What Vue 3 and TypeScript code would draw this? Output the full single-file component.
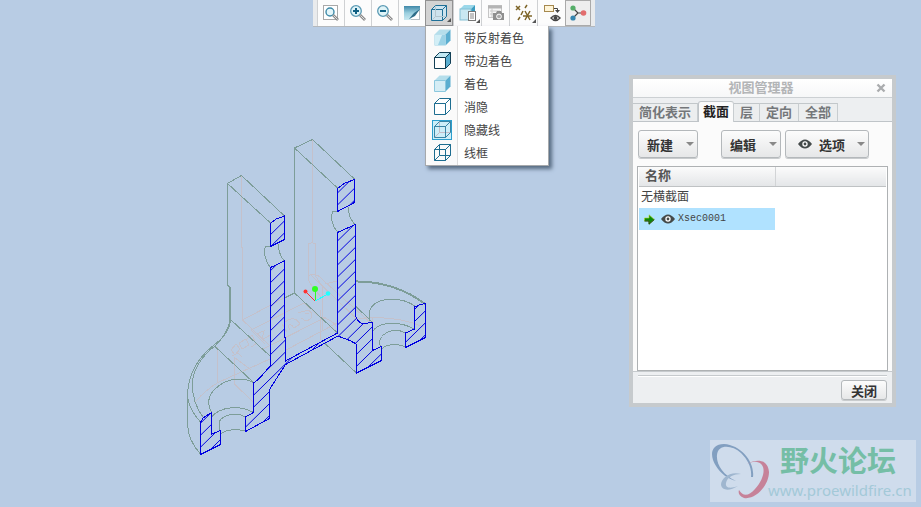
<script setup lang="ts">
import { ref } from 'vue'

interface StyleItem {
  name: string
  kind: 'reflect' | 'edges' | 'shaded' | 'nohidden' | 'hidden' | 'wire'
}

const styles: StyleItem[] = [
  { name: '带反射着色', kind: 'reflect' },
  { name: '带边着色', kind: 'edges' },
  { name: '着色', kind: 'shaded' },
  { name: '消隐', kind: 'nohidden' },
  { name: '隐藏线', kind: 'hidden' },
  { name: '线框', kind: 'wire' },
]
const activeStyle = ref<StyleItem['kind']>('hidden')

const tabs: string[] = ['简化表示', '截面', '层', '定向', '全部']
const activeTab = ref('截面')

// Section hatching: parallel lines, 12 units apart, drawn across the whole model
const hatch: string = Array.from({ length: 54 }, (_, k) => {
  const c = 355.7 + 12 * k
  return `M180 ${(c - 0.98 * 180).toFixed(1)}L440 ${(c - 0.98 * 440).toFixed(1)}`
}).join('')

const cuts: string[] = [
  'M270.5 223.5L276 219L284.5 216V239.5L270.5 246.5Z',
  'M337.5 188.5L345 183L354.5 179.5V202.5L337.5 211.5Z',
  'M337.5 232.5L355.5 224.5V316C357 320 359 323 363 323.5L372.5 322.5V350.5L381.5 346.5V360.5L356.5 373V344.5C351 340 345 339 338 336L285.5 364.5L269.5 389.5V418.5L245.5 431.5V417L253.5 412.5V383C262 378 264 372 268.5 368L270.5 365V267.5L284.5 261V337L285.5 338V361L337.5 333Z',
  'M200.5 422.5L203 418L211.5 412.5V434L220.5 430.5V444.5L200.5 454.5Z',
  'M414.5 307L420 304.5L425.5 303.5V337.5L405.5 347.5V333L414.5 329Z',
]

const edges: string[] = [
  'M270.5 223L227.5 183.5L241.5 175.5L284.5 216',
  'M227.5 183.5V285L230.5 288V319C230 331 222 339 214 345C200 356 187.5 373 187.5 397V424C188 436 193 446 200.5 454',
  'M229.5 288V322C228 332 221 340 215 346C204 354 192.5 369 192.5 383C192 401 199 412 203.5 418',
  'M187.5 397C189 407 195 416 200.5 422',
  'M231 320L270.5 356.5M215 346.5L253.5 382.5',
  'M253.5 382.5C245 378 234 378 225 382C210 390 205 400 211.5 412.5',
  'M211.5 417C221 406 240 405 253.5 412.5',
  'M219.5 431V421C224 414 238 412 245.5 417M220.5 434C226 429 238 429 245.5 431',
  'M270.5 246.5L266 246.5C263 250 265 261 270.5 268M278.5 244C278 251 281 257 284.5 261',
  'M337.5 188L294.5 148L312.5 139.5L354.5 179',
  'M294.5 148V293L337.5 333M294.5 293L284.5 298',
  'M337.5 211.5H333C330 217 332 226 337.5 232M348.5 207C348 214 351 220 354.5 224',
  'M370 321C367 309 373 302 384 300C394 298 407 300 414.5 306',
  'M372.5 332C377 323 395 319 414.5 329',
  'M380.5 347C376 335 392 326 405.5 333M382 349C386 344 398 343 405.5 347',
  'M355.5 306L372 322M325 343.5L356.5 373',
]

const hidden: string[] = [
  'M241.5 176V247H242.5V320L284 298M242.5 320L270 346',
  'M217.5 347V383M234.5 357V384L254 403M195 402C203 393 210 387 219 382L270 359',
  'M251 330L304 303L337 332M251 330L265 344M234 357L251 370M261 350L326 317',
  'M312.5 139V243M308.5 279V244L312 242.5L315.5 244V276L322 286V330M308.5 279C309 284 315 290 322 298',
  'M308.5 276C314 272 320 276 325 282L371 323M310 274L365 327M325 284L337 281',
  'M320.5 310V340M322 317C328 319 334 322 337 327M355.5 319C370 317 397 316 424 327',
  'M372.5 318V350M286 350L337 323',
  'M231 350L236 344L240 349L235 355ZM239 343L246 339L249 345L242 349ZM247 339L252 335L256 344L251 347M256 334L264 331L262 340L270 335M232 356L238 353L242 357',
  'M285 322C292 316 297 319 300 324L294 328C290 322 287 325 290 330M298 313L308 310C314 313 313 319 306 321L301 318M305 314L309 313M282 324L287 332',
]
</script>

<template>
  <main class="stage">
    <svg class="model" viewBox="180 130 260 340" role="img" aria-label="Xsec0001">
      <defs>
        <clipPath id="section-clip">
          <path v-for="(d, i) in cuts" :key="i" :d="d" />
        </clipPath>
      </defs>
      <g class="hidden-lines"><path v-for="(d, i) in hidden" :key="i" :d="d" /></g>
      <g class="edge-lines"><path v-for="(d, i) in edges" :key="i" :d="d" /></g>
      <path class="rim" d="M355.5 281.5C382 281 407 290 425 304" />
      <path class="section hatch" :d="hatch" clip-path="url(#section-clip)" />
      <path v-for="(d, i) in cuts" :key="i" class="section" :d="d" />
      <path class="axis-x" d="M315 301L306 292" />
      <path class="axis-y" d="M315 301V289" />
      <path class="axis-z" d="M315 301L328 294" />
      <circle cx="305.5" cy="291.5" r="2" fill="#ff3030" />
      <circle cx="315" cy="289" r="3" fill="#30ff20" />
      <circle cx="328" cy="293.5" r="2.3" fill="#20ffff" />
    </svg>

    <div class="toolbar-row">
      <nav class="toolbar" aria-label="视图">
        <button class="tool" type="button" aria-label="重新调整">
          <svg class="icon" viewBox="0 0 18 18">
            <rect x="1.5" y="1.5" width="14" height="14" fill="#fff" stroke="#a9a9a9" />
            <circle cx="8" cy="8" r="4" fill="#e4f6fa" stroke="#3e8aa8" stroke-width="1.4" />
            <path d="M11 11L16 16" stroke="#8b8b8b" stroke-width="2.6" />
            <path d="M11.5 11.5L15.6 15.6" stroke="#ddd" />
          </svg>
        </button>
        <button class="tool" type="button" aria-label="放大">
          <svg class="icon" viewBox="0 0 18 18">
            <circle cx="7" cy="7" r="5.3" fill="#dff4f8" stroke="#5a9ab4" stroke-width="1.3" />
            <path d="M4 7H10M7 4V10" stroke="#0e5f83" stroke-width="2" />
            <path d="M11 11L16 16" stroke="#8b8b8b" stroke-width="2.8" />
            <path d="M11.5 11.5L15.6 15.6" stroke="#ddd" />
          </svg>
        </button>
        <button class="tool" type="button" aria-label="缩小">
          <svg class="icon" viewBox="0 0 18 18">
            <circle cx="7" cy="7" r="5.3" fill="#dff4f8" stroke="#5a9ab4" stroke-width="1.3" />
            <path d="M4 7H10" stroke="#0e5f83" stroke-width="2" />
            <path d="M11 11L16 16" stroke="#8b8b8b" stroke-width="2.8" />
            <path d="M11.5 11.5L15.6 15.6" stroke="#ddd" />
          </svg>
        </button>
        <button class="tool" type="button" aria-label="重画">
          <svg class="icon" viewBox="0 0 18 18">
            <defs>
              <linearGradient id="repaint" x1="0" y1="0" x2="0" y2="1">
                <stop offset="0" stop-color="#3f88a8" />
                <stop offset=".5" stop-color="#9bcfdf" />
                <stop offset="1" stop-color="#c9e9f1" />
              </linearGradient>
            </defs>
            <rect x="1.5" y="2.5" width="15" height="13" fill="#fff" stroke="#b5bfc4" />
            <path d="M1 2H17V6L10 11C8 12 8 14 8 16H1Z" fill="url(#repaint)" />
            <path d="M17 5L11 9L6 15L12 12Z" fill="#2c6c88" />
          </svg>
        </button>
        <div class="dropdown">
          <button class="tool wide pressed" type="button" aria-label="显示样式" aria-haspopup="menu" aria-expanded="true">
            <svg class="icon" viewBox="0 0 18 18">
              <path d="M1.5 5.5L5.5 1.5H16.5V12.5L12.5 16.5H1.5ZM1.5 5.5H12.5V16.5M12.5 5.5L16.5 1.5" fill="#cde3ee" stroke="#1f6f97" />
              <path d="M5.5 2.5V12.5H15.5M5.5 12.5L2.5 15.5" fill="none" stroke="#b3c6cf" />
            </svg>
            <span class="corner"></span>
          </button>
          <div class="menu" role="menu">
            <button
              v-for="item in styles"
              :key="item.kind"
              class="menu-item"
              type="button"
              role="menuitemradio"
              :aria-checked="item.kind === activeStyle"
              @click="activeStyle = item.kind"
            >
              <span class="menu-icon" :class="{ chosen: item.kind === activeStyle }">
                <svg class="cube" :class="item.kind" viewBox="0 0 17 17">
                  <path class="back" d="M5.5 .5V11.5H16.5M5.5 11.5L.5 16.5" />
                  <path class="top" d="M.5 5.5L5.5 .5H16.5L11.5 5.5Z" />
                  <path class="side" d="M11.5 5.5L16.5 .5V11.5L11.5 16.5Z" />
                  <path class="front" d="M.5 5.5H11.5V16.5H.5Z" />
                  <path class="shine" d="M1 6H8L4 16H1Z" />
                </svg>
              </span>
              <span class="menu-text">{{ item.name }}</span>
            </button>
          </div>
        </div>
        <button class="tool wide" type="button" aria-label="已保存方向">
          <svg class="icon" viewBox="0 0 18 18">
            <path d="M1 5L5 1H16L12 5Z" fill="#9bd8ea" />
            <path d="M12 5L16 1V11L12 15Z" fill="#3a9cc0" />
            <rect x="1" y="5" width="11" height="11" fill="#c9e8f2" stroke="#83bfd4" />
            <rect x="9.5" y="7.5" width="7" height="9" fill="#fff" stroke="#777" />
            <path d="M11 10H15M11 12H15M11 14H15" stroke="#888" />
          </svg>
          <span class="corner"></span>
        </button>
        <button class="tool wide" type="button" aria-label="视图图像">
          <svg class="icon" viewBox="0 0 18 18">
            <rect x="1.5" y="1.5" width="13" height="12" fill="#f7f7f7" stroke="#c6c6c6" />
            <path d="M1 3H15" stroke="#b5b5b5" stroke-width="3" />
            <path d="M3 7H13M3 10H13M5 4V13" stroke="#c9c9c9" />
            <path d="M6 9H9L10 7H14L15 9H17V16H6Z" fill="#8f8f8f" />
            <circle cx="12" cy="12.5" r="2.4" fill="#aaa" stroke="#fff" />
          </svg>
        </button>
        <button class="tool wide" type="button" aria-label="基准显示过滤器">
          <svg class="icon" viewBox="0 0 18 18">
            <g fill="none" stroke="#7d6428" stroke-width="1.5">
              <path d="M1 2L5 6M5 2L1 6" />
              <path d="M12 1L10 4M8 7L6 11M5 13L3 16" />
              <path d="M8 12H17M10 7L15 16M15 7L10 16" />
            </g>
          </svg>
          <span class="corner"></span>
        </button>
        <button class="tool wide" type="button" aria-label="注释显示">
          <svg class="icon" viewBox="0 0 18 18">
            <rect x="1.5" y="1.5" width="9" height="6" fill="#fff5d8" stroke="#a6894f" />
            <path d="M11 4.5H14.5V8" fill="none" stroke="#444" />
            <path d="M12 6H17L14.5 9Z" fill="#444" />
            <path d="M8 14Q12.5 9 17 14Q12.5 19 8 14Z" fill="#fff" stroke="#444" stroke-width="1.4" />
            <circle cx="12.5" cy="14" r="2" fill="#444" />
          </svg>
        </button>
        <button class="tool selected" type="button" aria-label="旋转中心">
          <svg class="icon" viewBox="0 0 18 18">
            <path d="M4 4L9 9L4 14M9 9H14" fill="none" stroke="#444" stroke-width="1.2" />
            <circle cx="4" cy="4" r="2.6" fill="#55ae68" />
            <circle cx="4" cy="14" r="2.6" fill="#3686b0" />
            <circle cx="14.5" cy="9" r="2.8" fill="#e26d6d" />
          </svg>
        </button>
      </nav>
    </div>

    <section class="dialog" role="dialog" aria-labelledby="dialog-title">
      <header class="title-bar">
        <h1 id="dialog-title">视图管理器</h1>
        <button class="close" type="button" aria-label="关闭窗口">
          <svg viewBox="0 0 10 10"><path d="M1.5 1.5L8.5 8.5M8.5 1.5L1.5 8.5" /></svg>
        </button>
      </header>
      <div class="tabs" role="tablist">
        <button
          v-for="tab in tabs"
          :key="tab"
          class="tab"
          :class="{ current: tab === activeTab }"
          type="button"
          role="tab"
          :aria-selected="tab === activeTab"
          @click="activeTab = tab"
        >{{ tab }}</button>
      </div>
      <div class="panel">
        <div class="actions">
          <button class="action new" type="button"><span>新建</span><i class="arrow"></i></button>
          <button class="action" type="button"><span>编辑</span><i class="arrow"></i></button>
          <button class="action options" type="button">
            <svg class="eye" viewBox="0 0 14 10">
              <path d="M0 5Q7 -4 14 5Q7 14 0 5Z" fill="#444a4a" />
              <circle cx="7" cy="5" r="2.7" fill="#fff" />
              <circle cx="7" cy="5" r="1.4" fill="#444a4a" />
            </svg>
            <span>选项</span><i class="arrow"></i>
          </button>
        </div>
        <div class="list">
          <table>
            <thead>
              <tr><th scope="col">名称</th><td></td></tr>
            </thead>
            <tbody>
              <tr><td>无横截面</td><td></td></tr>
              <tr class="picked">
                <td>
                  <span class="entry">
                    <svg class="go" viewBox="0 0 11 11">
                      <path d="M.5 4H5V.8L10.3 5.5L5 10.2V7H.5Z" fill="#0a8a0a" stroke="#b8d820" stroke-width=".6" />
                      <path d="M.5 7H5V10.2L10.3 5.5" fill="none" stroke="#153c15" />
                    </svg>
                    <svg class="eye" viewBox="0 0 14 10">
                      <path d="M0 5Q7 -4 14 5Q7 14 0 5Z" fill="#444a4a" />
                      <circle cx="7" cy="5" r="2.7" fill="#fff" />
                      <circle cx="7" cy="5" r="1.4" fill="#444a4a" />
                    </svg>
                    <span class="code">Xsec0001</span>
                  </span>
                </td>
                <td></td>
              </tr>
            </tbody>
          </table>
        </div>
      </div>
      <footer class="dialog-foot">
        <button class="action done" type="button">关闭</button>
      </footer>
    </section>

    <aside class="watermark">
      <svg class="logo" viewBox="0 0 60 62">
        <path d="M43 37C45 22 31 5 14 4C1 4 -1 15 6 26C10 33 18 39 26 41C13 35 6 24 7 15C8 4 22 5 31 13C38 20 42 28 41 37Z" fill="#829fc0" />
        <path d="M37 24C48 18 58 20 59 32C59 45 46 60 34 58C29 56 28 53 29 50C33 57 39 56 45 49C55 38 57 24 47 22C43 21 40 23 37 24Z" fill="#c68299" />
        <path d="M31 34C20 31 11 38 11 45C12 51 20 51 28 46C20 49 15 48 16 43C17 37 24 34 31 34Z" fill="#9fb6cf" />
      </svg>
      <div class="brand">
        <strong>野火论坛</strong>
        <a href="http://www.proewildfire.cn">www.proewildfire.cn</a>
      </div>
    </aside>
  </main>
</template>

<style>
body {
  margin: 0;
  background: #b8cce4;
}
</style>

<style scoped>
.stage {
  position: relative;
  min-height: 100vh;
  overflow: hidden;
  background: #b8cce4;
  color: #444;
  font-family: "Liberation Sans", "Noto Sans CJK SC", sans-serif;
  font-size: 12px;
}
button {
  margin: 0;
  padding: 0;
  border: 0;
  background: none;
  color: inherit;
  font: inherit;
}
svg {
  display: block;
}

.model {
  position: absolute;
  left: 180px;
  top: 130px;
  width: 260px;
  height: 340px;
  shape-rendering: crispEdges;
}
.model path {
  fill: none;
  stroke-width: 1;
}
.hidden-lines { stroke: #c4c1cb; }
.edge-lines { stroke: #7d9d98; }
.model .rim { stroke: #7d9d98; stroke-width: 2; }
.section { stroke: #0000e0; }
.hatch { shape-rendering: auto; }
.axis-x { stroke: #ff3030; }
.axis-y { stroke: #30ff20; }
.axis-z { stroke: #20ffff; }
.model circle { shape-rendering: auto; }

.toolbar-row {
  position: relative;
  display: flex;
  justify-content: center;
  padding-right: 13px;
}
.toolbar {
  display: flex;
  padding: 0 4px;
  border-bottom: 1px solid #b4b8bc;
  background: #e9ebed;
}
.tool {
  position: relative;
  display: flex;
  align-items: center;
  justify-content: center;
  width: 27px;
  height: 26px;
  border-left: 1px solid #cfd1d3;
  background: #fcfcfc;
}
.wide { width: 28px; }
.icon {
  width: 18px;
  height: 18px;
}
.pressed {
  border: 1px solid #929292;
  background: #d3d3d3;
}
.selected {
  width: 26px;
  border: 1px solid #aaa;
  background: #eee;
}
.corner {
  position: absolute;
  right: 1px;
  bottom: 3px;
  border: 2px solid transparent;
  border-right-color: #555;
  border-bottom-color: #555;
}
.dropdown {
  position: relative;
}
.menu {
  position: absolute;
  left: 0;
  top: 100%;
  z-index: 2;
  width: 122px;
  padding-bottom: 1px;
  border: 1px solid #a6a9ac;
  border-top: 0;
  background: linear-gradient(90deg, #fafafa 31px, #ddd 31px, #ddd 32px, #fff 32px);
  box-shadow: 3px 3px 4px #566a80;
}
.menu-item {
  display: flex;
  align-items: center;
  width: 100%;
  height: 23px;
  padding-left: 6px;
  text-align: left;
}
.menu-icon {
  display: flex;
  align-items: center;
  justify-content: center;
  width: 20px;
  height: 20px;
  box-sizing: border-box;
}
.chosen {
  border: 1px solid #2c9fce;
  background: #cdeef8;
}
.menu-text {
  margin-left: 12px;
  white-space: nowrap;
}
.cube {
  width: 17px;
  height: 17px;
  flex: none;
  overflow: visible;
}
.cube path {
  fill: #fff;
  stroke: #1d6d90;
}
.cube .shine, .cube .back { display: none; }
.reflect path, .shaded path { stroke: none; }
.reflect .top, .shaded .top { fill: #b5deeb; }
.reflect .side, .shaded .side { fill: #5baed0; }
.reflect .front { fill: #9bd2e6; }
.reflect .shine { display: block; fill: #d2eef6; }
.shaded .front { fill: #d5edf5; stroke: #8cc8de; }
.edges path { stroke: #123f55; }
.edges .top { fill: #c2e8f3; }
.edges .side { fill: #5baed0; }
.hidden path { fill: none; stroke: #3a85a5; }
.hidden .back { display: block; stroke: #c4bcc6; }
.wire path { fill: none; }
.wire .back { display: block; }

.dialog {
  position: absolute;
  top: 75px;
  right: 25px;
  width: 259px;
  border: 4px solid #c6cacd;
  background: #edeff1;
}
.title-bar {
  display: flex;
  align-items: center;
  height: 18px;
  border-bottom: 1px solid #ccd0d3;
  background: linear-gradient(#fff, #f6f7f8);
}
.title-bar h1 {
  flex: 1;
  margin: 0;
  padding-left: 19px;
  color: #b3b5b7;
  font-size: 13px;
  line-height: 18px;
  text-align: center;
}
.close {
  width: 22px;
  height: 18px;
}
.close svg {
  width: 10px;
  height: 10px;
  margin: 0 auto;
}
.close path {
  stroke: #aaacae;
  stroke-width: 2.4;
}
.tabs {
  display: flex;
  align-items: flex-end;
  height: 23px;
  border-bottom: 1px solid #bfc4c8;
}
.tab {
  height: 18px;
  padding: 0 6px;
  border-top: 1px solid #c2c7ca;
  border-right: 1px solid #c8cdd0;
  background: #eceeef;
  color: #74777a;
  font-size: 13px;
  font-weight: bold;
  line-height: 18px;
  white-space: nowrap;
}
.tab.current {
  height: 21px;
  margin-bottom: -1px;
  padding: 0 4px;
  border-left: 1px solid #bfc4c8;
  border-radius: 3px 3px 0 0;
  background: #fbfbfb;
  color: #222;
}
.panel {
  padding: 8px 4px 0;
  background: #fbfbfb;
}
.actions {
  display: flex;
  gap: 4px;
}
.action {
  display: flex;
  align-items: center;
  box-sizing: border-box;
  width: 60px;
  height: 28px;
  padding: 0 3px 0 8px;
  border: 1px solid #b4b8bb;
  border-radius: 3px;
  background: linear-gradient(#fcfcfc, #e6e7e8);
  box-shadow: 0 1px #c8cbcd;
  color: #333;
  font-size: 13px;
  font-weight: bold;
}
.new { margin: 0 19px 0 1px; }
.options {
  width: 84px;
  padding-left: 12px;
}
.options span { margin-left: 7px; }
.arrow {
  width: 0;
  height: 0;
  margin-left: auto;
  border: 4px solid transparent;
  border-top-color: #888;
  border-bottom-width: 0;
}
.eye {
  width: 14px;
  height: 10px;
}
.list {
  height: 203px;
  margin-top: 8px;
  padding: 0 1px;
  border: 1px solid #aeb1b3;
  background: #fff;
}
table {
  width: 100%;
  border-collapse: collapse;
  table-layout: fixed;
}
th, td {
  box-sizing: border-box;
  height: 22px;
  padding: 0 2px;
  line-height: 20px;
  text-align: left;
}
thead th, thead td {
  height: 19px;
  border-bottom: 1px solid #bfc2c4;
  background: linear-gradient(#fbfbfb, #e4e6e8);
  line-height: 18px;
}
thead th {
  width: 136px;
  padding-left: 6px;
  border-right: 1px solid #d2d4d6;
  color: #555;
  font-size: 13px;
}
.picked td:first-child { background: #b0e2ff; }
.entry {
  display: flex;
  align-items: center;
}
.go {
  width: 11px;
  height: 11px;
  margin: 0 6px 0 3px;
}
.code {
  margin-left: 3px;
  font-family: "Liberation Mono", monospace;
  font-size: 10px;
  line-height: 22px;
}
.dialog-foot {
  display: flex;
  flex-direction: column;
  align-items: flex-end;
  padding: 0 5px 3px;
  border-top: 1px solid #c6cacd;
}
.dialog-foot::before {
  content: "";
  width: 100%;
  height: 1px;
  margin: 3px 0 4px;
  background: #c6cacd;
  box-shadow: 0 1px #fff;
}
.done {
  justify-content: center;
  width: 46px;
  height: 20px;
  padding: 0;
}

.watermark {
  position: absolute;
  right: 5px;
  bottom: 5px;
  display: flex;
  width: 206px;
  height: 62px;
  background: #cfdcec;
}
.logo {
  width: 60px;
  height: 62px;
  flex: none;
}
.brand {
  display: flex;
  flex-direction: column;
  align-items: flex-start;
}
.brand strong {
  margin-left: 10px;
  color: #75bea6;
  font-size: 29px;
  line-height: 44px;
  white-space: nowrap;
}
.brand a {
  margin-left: -2px;
  color: #a3c9d8;
  font-family: "Noto Sans", sans-serif;
  font-size: 15px;
  line-height: 12px;
  text-decoration: none;
}
</style>
